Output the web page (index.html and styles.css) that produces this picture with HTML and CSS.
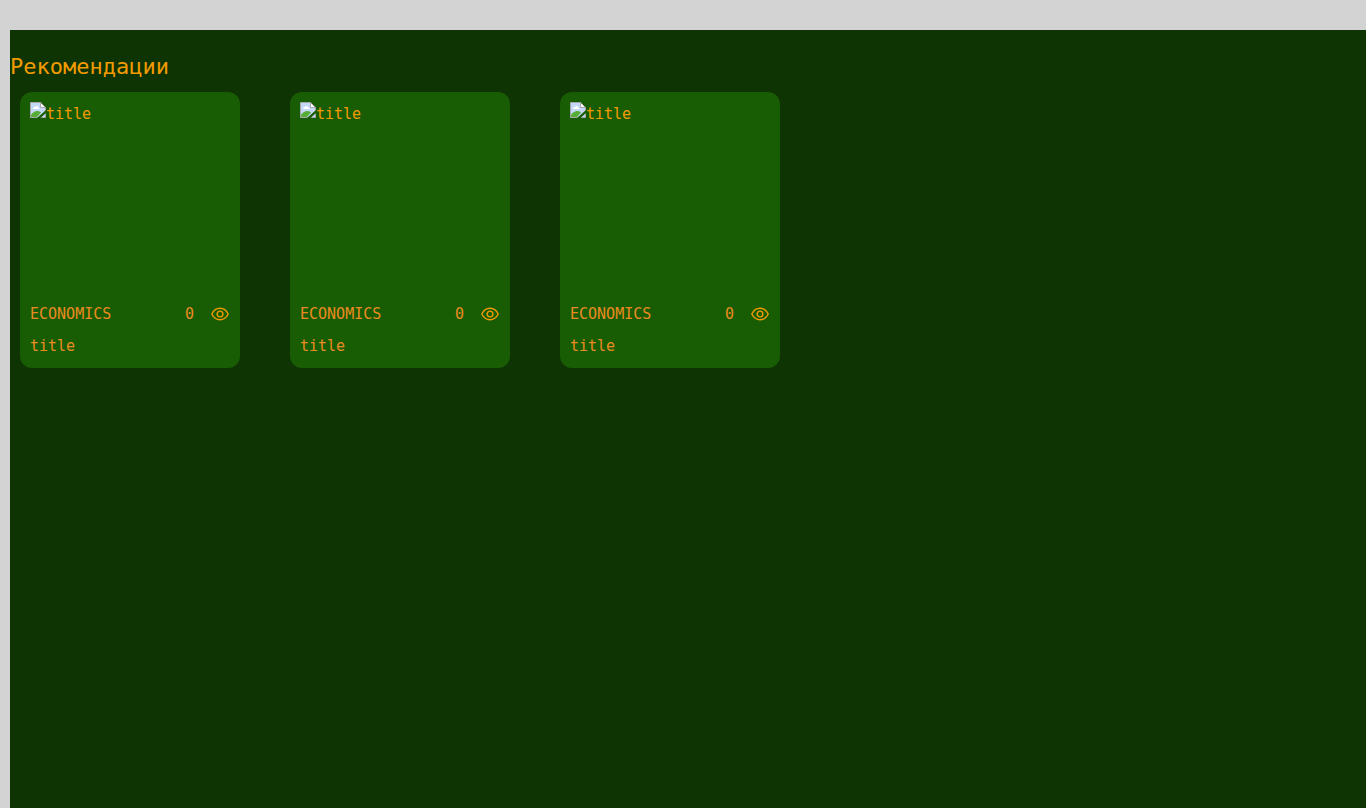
FILE: index.html
```html
<!DOCTYPE html>
<html lang="ru">
<head>
<meta charset="utf-8">
<meta name="viewport" content="width=device-width, initial-scale=1">
<title>Рекомендации</title>
<link rel="stylesheet" href="styles.css">
</head>
<body>
<svg class="sprite" aria-hidden="true">
  <symbol id="picture" viewBox="0 0 16 16">
    <path d="M.5.5h10l5 5v10H.5z" fill="#c6d8f8" stroke="#a6a6a6"/>
    <path d="M10.500.5v5h5z" fill="#fff" stroke="#a6a6a6"/>
    <path d="M3 7c0-1.500 1-2 2-2 .5-1.500 3-1.500 3 .5 1 0 1.500.5 1.500 1.500z" fill="#fff"/>
    <path d="M1 15v-2c2-3 4-4 6-4 2 0 3 .5 4 1.500L7 15z" fill="#56ae36"/>
    <path d="M7 16l9-8v3l-5.500 5z" fill="#185c04"/>
  </symbol>
  <symbol id="eye" viewBox="0 0 20 20">
    <path d="M1.800 10C3.600 6.300 6.500 4.300 10 4.300s6.400 2 8.200 5.700c-1.800 3.700-4.700 5.700-8.200 5.700S3.600 13.700 1.800 10z" fill="none" stroke="currentColor" stroke-width="1.400"/>
    <circle cx="10" cy="10" r="2.900" fill="none" stroke="currentColor" stroke-width="1.400"/>
  </symbol>
</svg>
<main class="page">
  <h1 class="heading">Рекомендации</h1>
  <div class="cards">
    <article class="card">
      <div class="cover"><svg class="cover-icon"><use href="#picture"/></svg><span>title</span></div>
      <div class="meta"><span class="category">ECONOMICS</span><span class="views">0</span><svg class="eye"><use href="#eye"/></svg></div>
      <div class="name">title</div>
    </article>
    <article class="card">
      <div class="cover"><svg class="cover-icon"><use href="#picture"/></svg><span>title</span></div>
      <div class="meta"><span class="category">ECONOMICS</span><span class="views">0</span><svg class="eye"><use href="#eye"/></svg></div>
      <div class="name">title</div>
    </article>
    <article class="card">
      <div class="cover"><svg class="cover-icon"><use href="#picture"/></svg><span>title</span></div>
      <div class="meta"><span class="category">ECONOMICS</span><span class="views">0</span><svg class="eye"><use href="#eye"/></svg></div>
      <div class="name">title</div>
    </article>
  </div>
</main>
</body>
</html>
```
FILE: styles.css
```css
* {
  box-sizing: border-box;
}

body {
  display: flex;
  min-height: 100vh;
  margin: 0;
  padding: 30px 0 0 10px;
  background: #d3d3d3;
  color: #f29b00;
  font: 15px/24px "DejaVu Sans Mono", monospace;
}

.sprite {
  display: none;
}

.page {
  flex: 1;
  padding-top: 20px;
  background: #0e3403;
}

.heading {
  margin: 0;
  font-size: 22px;
  font-weight: 400;
  line-height: 34px;
}

.cards {
  display: flex;
  flex-wrap: wrap;
  gap: 20px 50px;
  padding: 8px 10px;
}

.card {
  width: 220px;
  padding: 10px;
  border-radius: 12px;
  background: #185c04;
}

.cover {
  display: flex;
  height: 200px;
}

.cover-icon {
  width: 16px;
  height: 16px;
}

.meta {
  display: flex;
  align-items: center;
}

.category,
.views,
.name {
  color: #ea8b20;
}

.category {
  flex: 1;
}

.views {
  margin-right: 16px;
}

.eye {
  width: 20px;
  height: 20px;
}

.name {
  margin-top: 8px;
}
```
